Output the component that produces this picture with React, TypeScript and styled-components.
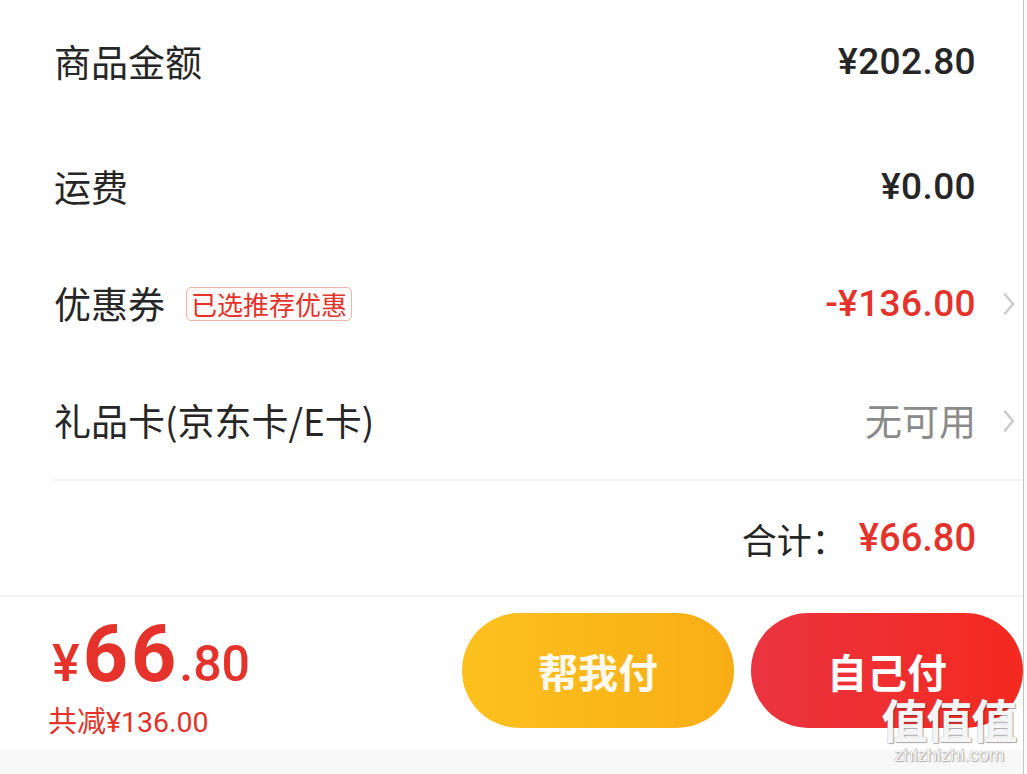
import React from "react";
import styled, { createGlobalStyle } from "styled-components";

const GlobalStyle = createGlobalStyle`
  html, body {
    margin: 0;
    padding: 0;
    background: #ffffff;
  }
  body {
    font-family: "Noto Sans CJK SC", "Noto Sans", sans-serif;
    overflow: hidden;
  }
  * { box-sizing: border-box; }
`;

const CJK = `"Noto Sans CJK SC", "Noto Sans", sans-serif`;
const NUM = `Roboto, "Noto Sans CJK SC", sans-serif`;
const RED = "#e5322a";

const Page = styled.div`
  position: relative;
  width: 1024px;
  height: 774px;
  border-right: 1px solid #c2c2c2;
  background: #ffffff;
  display: flex;
  flex-direction: column;
  overflow: hidden;
`;

const Summary = styled.section`
  display: flex;
  flex-direction: column;
`;

const Row = styled.div<{ $h: number; $mb?: number }>`
  height: ${(p) => p.$h}px;
  margin-bottom: ${(p) => p.$mb ?? 0}px;
  display: flex;
  align-items: center;
  padding: 0 8px 0 54px;
`;

const Label = styled.span`
  font-family: ${CJK};
  font-size: 37px;
  line-height: 1;
  color: #262626;
`;

const Badge = styled.span`
  margin-left: 21px;
  font-family: ${CJK};
  font-size: 26px;
  line-height: 32px;
  padding: 0 4px;
  color: ${RED};
  border: 1px solid #f0b4ac;
  border-radius: 5px;
  background: #fffafa;
`;

const Spacer = styled.div`
  flex: 1;
`;

const Value = styled.span<{ $tone?: "dark" | "red" | "muted" }>`
  font-family: ${(p) => (p.$tone === "muted" ? CJK : NUM)};
  font-size: 37px;
  line-height: 1;
  font-weight: ${(p) => (p.$tone === "muted" ? 400 : 500)};
  letter-spacing: ${(p) => (p.$tone === "muted" ? 0 : 0.4)}px;
  color: ${(p) =>
    p.$tone === "red" ? RED : p.$tone === "muted" ? "#8a8a8a" : "#262626"};
`;

const ChevronSlot = styled.span`
  width: 39px;
  display: flex;
  justify-content: flex-end;
  align-items: center;
  height: 24px;
`;

const Divider = styled.hr`
  margin: 0 0 0 52px;
  border: none;
  height: 2px;
  background: #f3f3f3;
`;

const TotalRow = styled.div`
  height: 114px;
  display: flex;
  align-items: center;
  justify-content: flex-end;
  padding-right: 47px;
`;

const TotalLabel = styled.span`
  font-family: ${CJK};
  font-size: 35px;
  line-height: 1;
  color: #262626;
  margin-right: 12px;
`;

const TotalAmount = styled.span`
  font-family: ${NUM};
  font-size: 38px;
  font-weight: 500;
  line-height: 1;
  color: ${RED};
`;

const Footer = styled.footer`
  border-top: 2px solid #f3f3f3;
  height: 155px;
  padding: 16px 0 0 52px;
  display: flex;
  align-items: flex-start;
  justify-content: space-between;
`;

const PriceBlock = styled.div`
  margin-top: 2px;
  display: flex;
  flex-direction: column;
`;

const PriceLine = styled.div`
  font-family: ${NUM};
  color: ${RED};
  font-size: 78px;
  line-height: 77px;
  white-space: nowrap;
`;

const PricePart = styled.span<{ $size: number; $weight: number; $track?: number; $gap?: number }>`
  font-size: ${(p) => p.$size}px;
  font-weight: ${(p) => p.$weight};
  letter-spacing: ${(p) => p.$track ?? 0}px;
  margin-left: ${(p) => p.$gap ?? 0}px;
  line-height: 1;
`;

const Saved = styled.div`
  margin: 9px 0 0 -4px;
  font-family: ${NUM};
  font-size: 28.5px;
  line-height: 32px;
  color: ${RED};
  white-space: nowrap;
`;

const SavedCJK = styled.span`
  font-family: ${CJK};
  font-size: 29px;
`;

const Buttons = styled.div`
  display: flex;
  gap: 17px;
`;

const PayButton = styled.button<{ $variant: "help" | "self" }>`
  width: 272px;
  height: 115px;
  border: none;
  border-radius: 58px;
  padding: 0;
  display: flex;
  align-items: center;
  justify-content: center;
  font-family: ${CJK};
  font-size: 40px;
  line-height: 1;
  font-weight: 700;
  color: ${(p) => (p.$variant === "help" ? "#fffaf0" : "#ffffff")};
  background: ${(p) =>
    p.$variant === "help"
      ? "linear-gradient(90deg, #fcc11f 0%, #f9ad15 100%)"
      : "linear-gradient(90deg, #ea3440 0%, #f4291f 100%)"};
`;

const BottomBand = styled.div`
  flex: 1;
  background: #f8f8f8;
`;

const Watermark = styled.div`
  position: absolute;
  left: 878px;
  top: 696px;
  width: 142px;
  display: flex;
  flex-direction: column;
  align-items: center;
  gap: 6px;
  pointer-events: none;
`;

const WatermarkMark = styled.span`
  font-family: ${CJK};
  font-size: 46px;
  font-weight: 700;
  line-height: 44px;
  letter-spacing: -1px;
  color: rgba(255, 255, 255, 0.92);
  text-shadow: 0 0 1px #9a9a9a, 1px 1px 1px rgba(0, 0, 0, 0.35);
`;

const WatermarkUrl = styled.span`
  font-family: "Liberation Sans", Arial, sans-serif;
  font-size: 19px;
  line-height: 18px;
  letter-spacing: -0.3px;
  color: rgba(255, 255, 255, 0.95);
  text-shadow: 0 0 1px #8a8a8a, 1px 1px 1px rgba(0, 0, 0, 0.3);
`;

const Chevron = () => (
  <svg width="12" height="22" viewBox="0 0 12 22" fill="none">
    <path
      d="M2 1.5 L10 11 L2 20.5"
      stroke="#cbcbcb"
      strokeWidth="2.6"
      strokeLinecap="round"
      strokeLinejoin="round"
    />
  </svg>
);

export default function App() {
  return (
    <>
      <GlobalStyle />
      <Page>
        <Summary>
          <Row $h={122} $mb={6}>
            <Label>商品金额</Label>
            <Spacer />
            <Value>¥202.80</Value>
            <ChevronSlot />
          </Row>
          <Row $h={117}>
            <Label>运费</Label>
            <Spacer />
            <Value>¥0.00</Value>
            <ChevronSlot />
          </Row>
          <Row $h={117}>
            <Label>优惠券</Label>
            <Badge>已选推荐优惠</Badge>
            <Spacer />
            <Value $tone="red">-¥136.00</Value>
            <ChevronSlot>
              <Chevron />
            </ChevronSlot>
          </Row>
          <Row $h={117}>
            <Label>礼品卡(京东卡/E卡)</Label>
            <Spacer />
            <Value $tone="muted">无可用</Value>
            <ChevronSlot>
              <Chevron />
            </ChevronSlot>
          </Row>
        </Summary>
        <Divider />
        <TotalRow>
          <TotalLabel>合计：</TotalLabel>
          <TotalAmount>¥66.80</TotalAmount>
        </TotalRow>
        <Footer>
          <PriceBlock>
            <PriceLine>
              <PricePart $size={52} $weight={500}>¥</PricePart>
              <PricePart $size={79} $weight={700} $track={3} $gap={3}>66</PricePart>
              <PricePart $size={50} $weight={500}>.80</PricePart>
            </PriceLine>
            <Saved>
              <SavedCJK>共减</SavedCJK>¥136.00
            </Saved>
          </PriceBlock>
          <Buttons>
            <PayButton $variant="help">帮我付</PayButton>
            <PayButton $variant="self">自己付</PayButton>
          </Buttons>
        </Footer>
        <BottomBand />
        <Watermark>
          <WatermarkMark>值值值</WatermarkMark>
          <WatermarkUrl>zhizhizhi.com</WatermarkUrl>
        </Watermark>
      </Page>
    </>
  );
}
